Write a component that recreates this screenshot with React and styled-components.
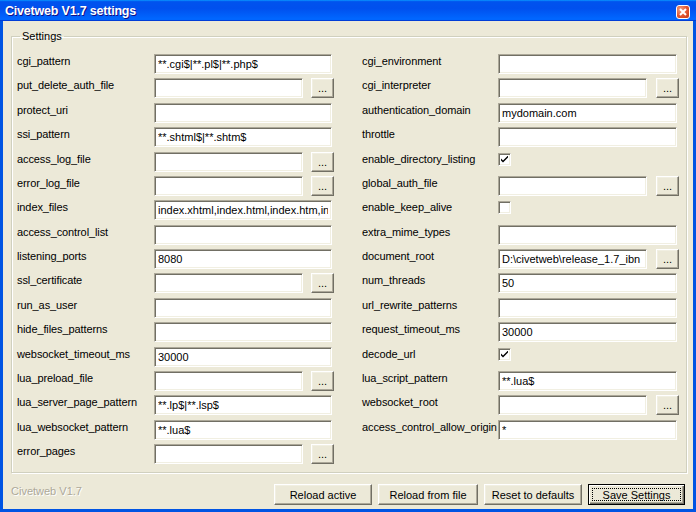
import styled, { createGlobalStyle } from "styled-components";

const GlobalStyle = createGlobalStyle`
  html, body {
    margin: 0;
    padding: 0;
    width: 696px;
    height: 512px;
    overflow: hidden;
    background: #ece9d8;
  }
  * {
    box-sizing: border-box;
  }
`;

const Window = styled.div`
  width: 696px;
  height: 512px;
  display: flex;
  flex-direction: column;
  background: #0054e3;
  font-family: "Liberation Sans", Arial, sans-serif;
  font-size: 11px;
  color: #000;
`;

const TitleBar = styled.div`
  height: 21px;
  flex: none;
  display: flex;
  align-items: center;
  justify-content: space-between;
  padding: 0 6px 0 5px;
  background: linear-gradient(
    180deg,
    #0997ff,
    #0053ee 8%,
    #0050ee 40%,
    #0066ff 88%,
    #0066ff 93%,
    #005bff 95%,
    #003dd7 96%,
    #003dd7
  );
`;

const Title = styled.span`
  color: #fff;
  font-weight: bold;
  font-size: 12.5px;
  letter-spacing: -0.2px;
  text-shadow: 1px 1px #0f1089;
`;

const CloseBox = styled.div`
  width: 14px;
  height: 14px;
  margin-top: 2px;
  border: 1px solid #fff;
  border-radius: 3px;
  background: radial-gradient(circle at 30% 30%, #f0a080, #e0542e 55%, #c53a16);
  display: flex;
  align-items: center;
  justify-content: center;
`;

const Client = styled.div`
  flex: 1;
  margin: 0 3px 3px;
  background: #ece9d8;
  display: flex;
  flex-direction: column;
  padding-top: 9px;
`;

const GroupBox = styled.fieldset`
  margin: 0 6px 0 8px;
  padding: 11px 7px 8px 5px;
  border: 1px solid #d0d0bf;
  box-shadow: inset 1px 1px #fff, 1px 1px #fff;
  border-radius: 0;
  min-width: 0;
`;

const Legend = styled.legend`
  padding: 0 2px;
  margin-left: 3px;
  line-height: 13px;
`;

const Columns = styled.div`
  display: grid;
  grid-template-columns: 317px 317px;
  column-gap: 28px;
`;

const Column = styled.div`
  display: grid;
  grid-template-rows: repeat(17, 20px);
  row-gap: 4.375px;
`;

const Row = styled.div`
  display: grid;
  grid-template-columns: ${(p) => p.labelWidth}px 1fr;
  align-items: start;
`;

const Label = styled.span`
  padding-top: 1px;
  line-height: 13px;
  letter-spacing: -0.1px;
  white-space: nowrap;
`;

const Control = styled.div`
  display: flex;
  justify-content: space-between;
  align-items: start;
`;

const TextBox = styled.input`
  height: 20px;
  width: ${(p) => (p.short ? "149px" : "calc(100% - 2px)")};
  flex: none;
  margin: 0;
  padding: 0 3px;
  font-family: "Liberation Sans", Arial, sans-serif;
  font-size: 11px;
  color: #000;
  background: #fff;
  border-style: solid;
  border-width: 1px;
  border-color: #aca899 #fff #fff #aca899;
  box-shadow: inset 1px 1px #716f64, inset -1px -1px #f1efe2;
  outline: none;
`;

const Browse = styled.div`
  width: 23px;
  height: 20px;
  flex: none;
  display: flex;
  align-items: flex-end;
  justify-content: center;
  padding-bottom: 4px;
  line-height: 10px;
  background: #ece9d8;
  border-style: solid;
  border-width: 1px;
  border-color: #fff #716f64 #716f64 #fff;
  box-shadow: inset -1px -1px #aca899, inset 1px 1px #f1efe2;
`;

const CheckBox = styled.div`
  width: 13px;
  height: 13px;
  margin-top: 1px;
  background: #fff;
  border-style: solid;
  border-width: 1px;
  border-color: #aca899 #fff #fff #aca899;
  box-shadow: inset 1px 1px #716f64, inset -1px -1px #f1efe2;
  display: flex;
  align-items: center;
  justify-content: center;
`;

const Footer = styled.div`
  height: 36px;
  flex: none;
  display: flex;
  align-items: flex-start;
  padding: 11px 8px 0 8px;
`;

const Version = styled.span`
  flex: 1;
  margin-top: 1px;
  line-height: 13px;
  color: #aca899;
  text-shadow: 1px 1px #fff;
`;

const Buttons = styled.div`
  display: flex;
  gap: 6px;
`;

const PushButton = styled.div`
  position: relative;
  width: ${(p) => p.w}px;
  height: 21px;
  display: flex;
  align-items: center;
  justify-content: center;
  background: #ece9d8;
  border-style: solid;
  border-width: 1px;
  border-color: ${(p) =>
    p.isDefault ? "#000" : "#fff #716f64 #716f64 #fff"};
  box-shadow: ${(p) =>
    p.isDefault
      ? "inset 1px 1px #fff, inset -1px -1px #716f64, inset -2px -2px #aca899"
      : "inset -1px -1px #aca899, inset 1px 1px #f1efe2"};
`;

const FocusRing = styled.span`
  position: absolute;
  inset: 3px;
  border: 1px dotted #000;
`;

const left = [
  { label: "cgi_pattern", value: "**.cgi$|**.pl$|**.php$" },
  { label: "put_delete_auth_file", browse: true },
  { label: "protect_uri" },
  { label: "ssi_pattern", value: "**.shtml$|**.shtm$" },
  { label: "access_log_file", browse: true },
  { label: "error_log_file", browse: true },
  {
    label: "index_files",
    value:
      "index.xhtml,index.html,index.htm,index.lp,index.lsp,index.lua,index.cgi,index.shtml,index.php",
  },
  { label: "access_control_list" },
  { label: "listening_ports", value: "8080" },
  { label: "ssl_certificate", browse: true },
  { label: "run_as_user" },
  { label: "hide_files_patterns" },
  { label: "websocket_timeout_ms", value: "30000" },
  { label: "lua_preload_file", browse: true },
  { label: "lua_server_page_pattern", value: "**.lp$|**.lsp$" },
  { label: "lua_websocket_pattern", value: "**.lua$" },
  { label: "error_pages", browse: true },
];

const right = [
  { label: "cgi_environment" },
  { label: "cgi_interpreter", browse: true },
  { label: "authentication_domain", value: "mydomain.com" },
  { label: "throttle" },
  { label: "enable_directory_listing", check: true, checked: true },
  { label: "global_auth_file", browse: true },
  { label: "enable_keep_alive", check: true },
  { label: "extra_mime_types" },
  { label: "document_root", value: "D:\\civetweb\\release_1.7_ibn", browse: true },
  { label: "num_threads", value: "50" },
  { label: "url_rewrite_patterns" },
  { label: "request_timeout_ms", value: "30000" },
  { label: "decode_url", check: true, checked: true },
  { label: "lua_script_pattern", value: "**.lua$" },
  { label: "websocket_root", browse: true },
  { label: "access_control_allow_origin", value: "*" },
];

function Tick() {
  return (
    <svg width="7" height="7" viewBox="0 0 7 7">
      <path d="M0 2.5 L2 4.5 L7 -0.5 L7 1.5 L2 6.5 L0 4.5 Z" fill="#000" />
    </svg>
  );
}

function Field({ item, labelWidth }) {
  return (
    <Row labelWidth={labelWidth}>
      <Label>{item.label}</Label>
      {item.check ? (
        <CheckBox>{item.checked && <Tick />}</CheckBox>
      ) : (
        <Control>
          <TextBox short={item.browse} readOnly value={item.value || ""} />
          {item.browse && <Browse>...</Browse>}
        </Control>
      )}
    </Row>
  );
}

export default function App() {
  return (
    <>
      <GlobalStyle />
      <Window>
        <TitleBar>
          <Title>Civetweb V1.7 settings</Title>
          <CloseBox>
            <svg width="8" height="8" viewBox="0 0 8 8">
              <path d="M1 1 L7 7 M7 1 L1 7" stroke="#fff" strokeWidth="2" />
            </svg>
          </CloseBox>
        </TitleBar>
        <Client>
          <GroupBox>
            <Legend>Settings</Legend>
            <Columns>
              <Column>
                {left.map((item) => (
                  <Field key={item.label} item={item} labelWidth={137} />
                ))}
              </Column>
              <Column>
                {right.map((item) => (
                  <Field key={item.label} item={item} labelWidth={136} />
                ))}
              </Column>
            </Columns>
          </GroupBox>
          <Footer>
            <Version>Civetweb V1.7</Version>
            <Buttons>
              <PushButton w={98}>Reload active</PushButton>
              <PushButton w={100}>Reload from file</PushButton>
              <PushButton w={98}>Reset to defaults</PushButton>
              <PushButton w={97} isDefault>
                <FocusRing />
                Save Settings
              </PushButton>
            </Buttons>
          </Footer>
        </Client>
      </Window>
    </>
  );
}
